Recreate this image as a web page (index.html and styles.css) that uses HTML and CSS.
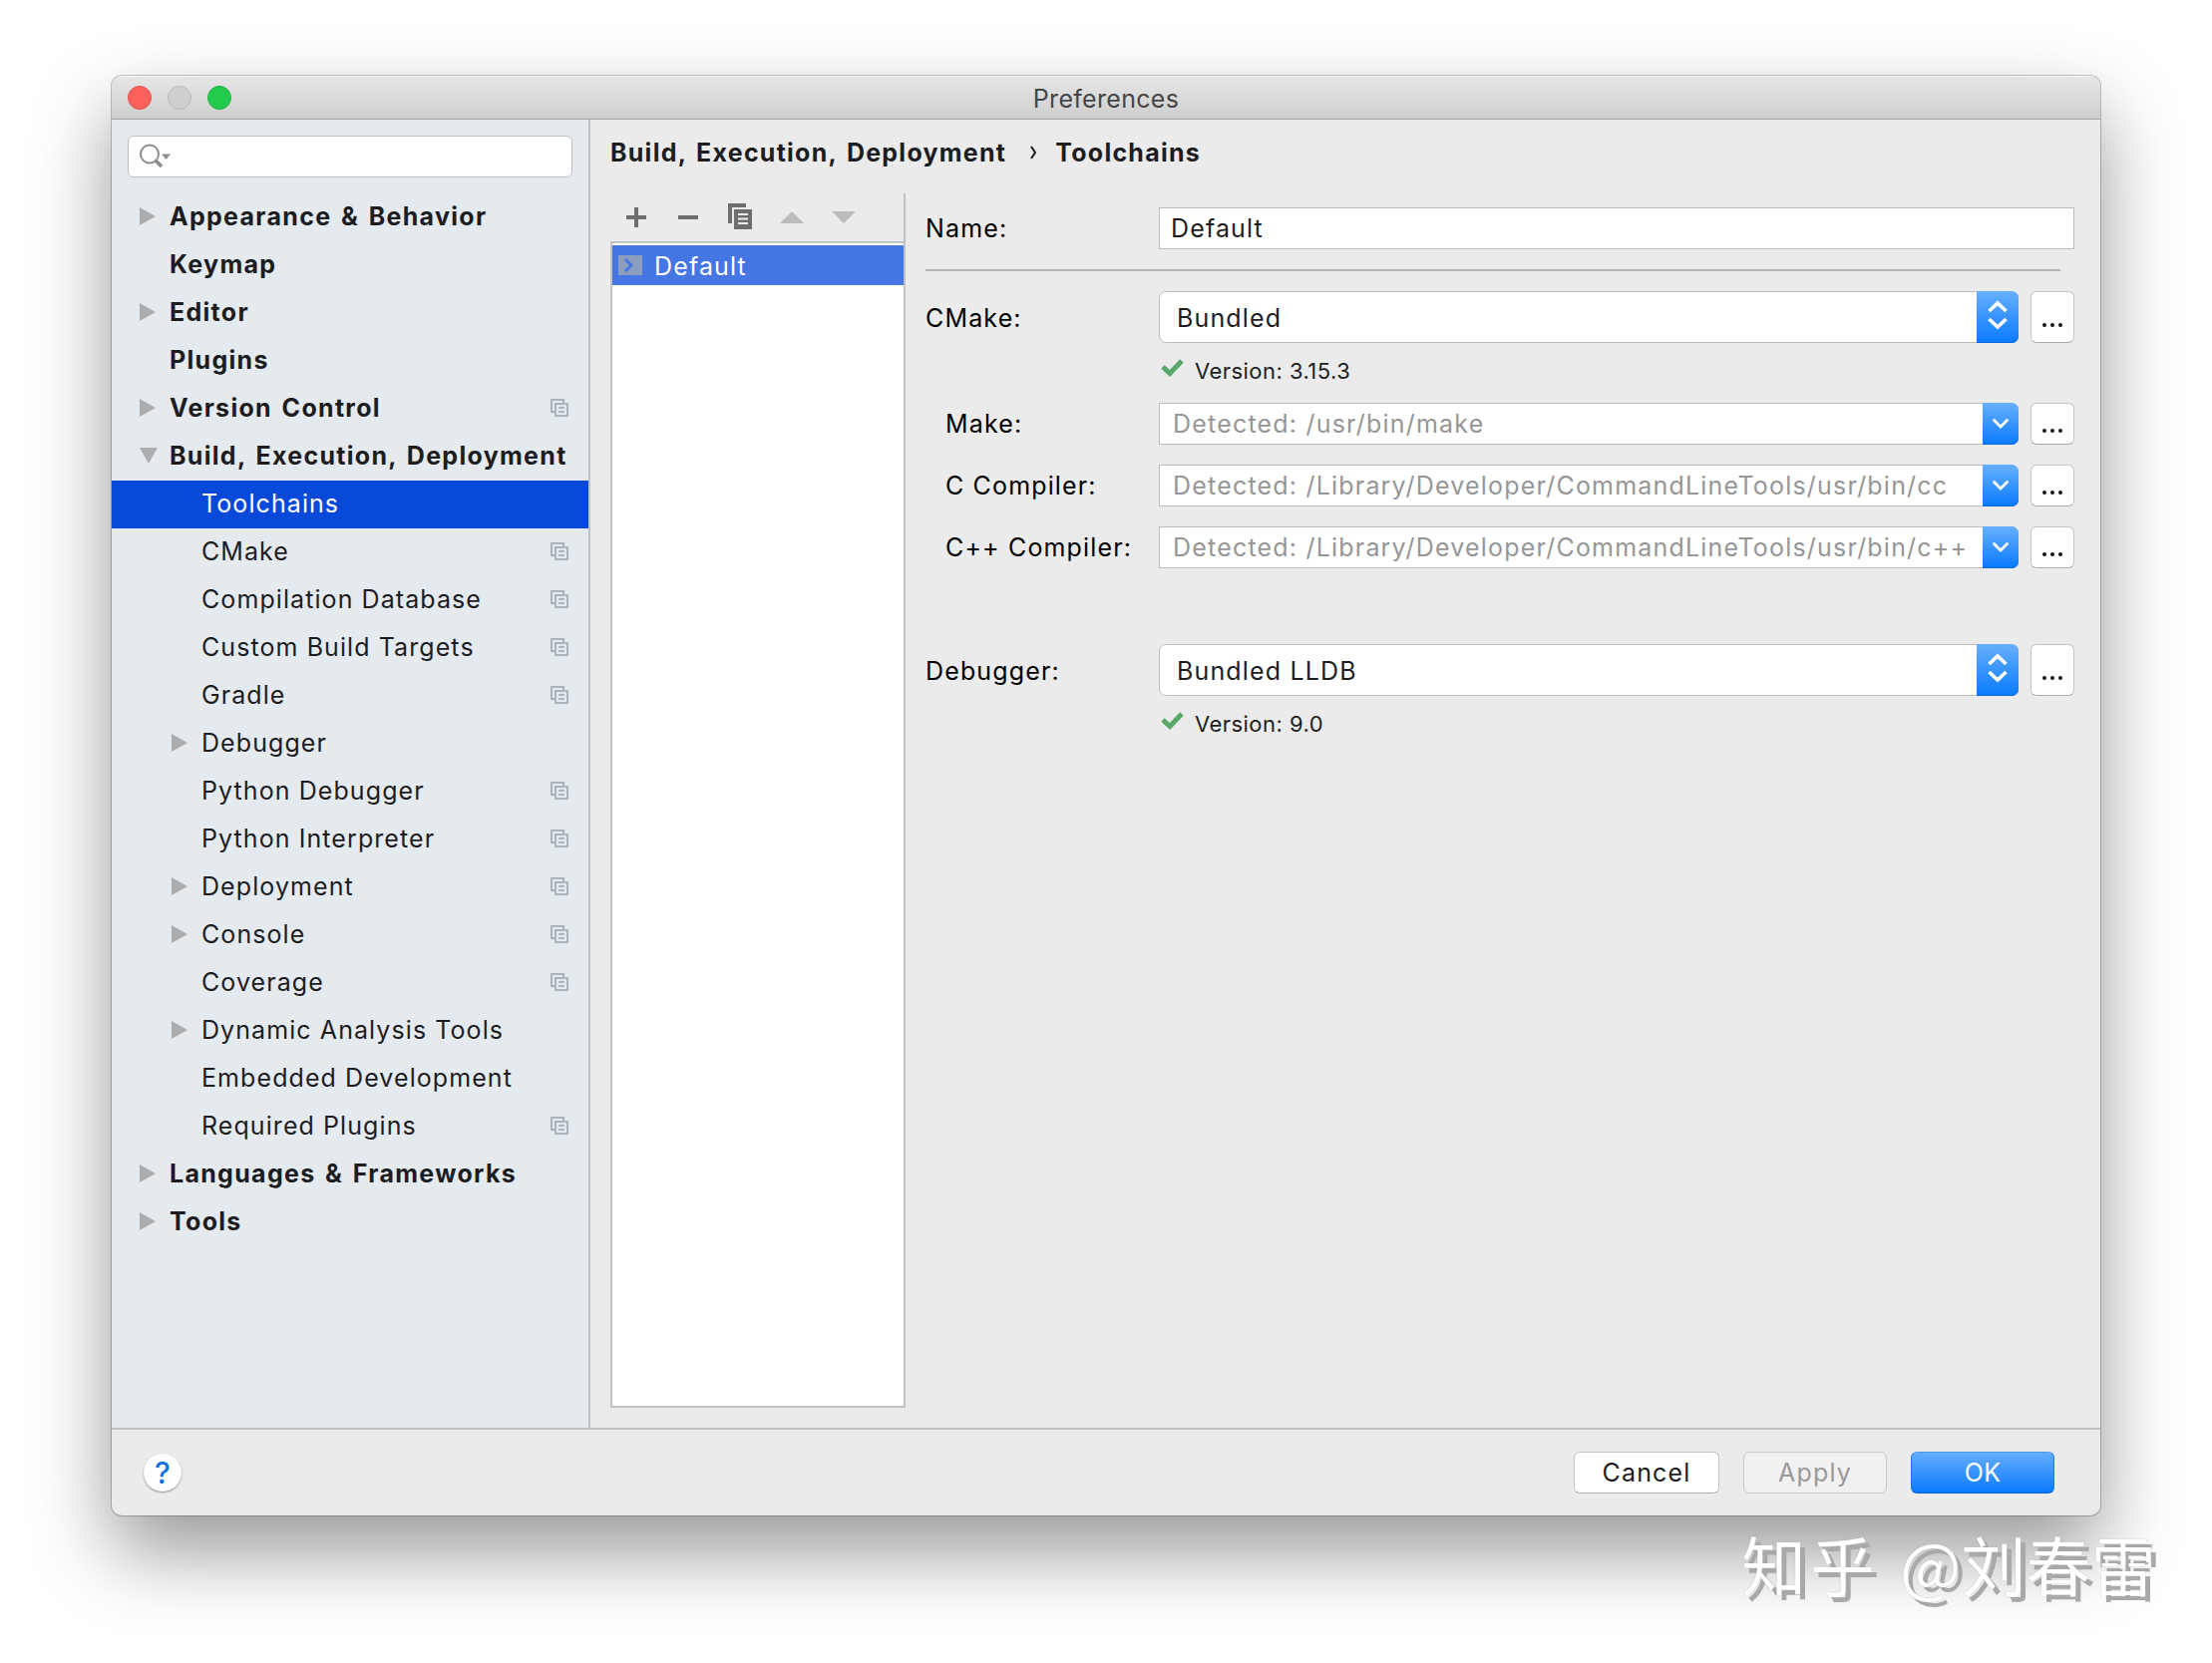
FILE: index.html
```html
<!DOCTYPE html>
<html>
<head>
	<meta charset="utf-8">
	<title>Preferences</title>
	<link rel="stylesheet" href="styles.css">
</head>
<body>
	<!-- shared icons -->
	<svg class="defs">
		<symbol id="right" viewBox="0 0 16 18"><path d="M0 0L16 9L0 18z" fill="#adadad"/></symbol>
		<symbol id="down" viewBox="0 0 18 16"><path d="M0 0H18L9 16z" fill="#adadad"/></symbol>
		<symbol id="proj" viewBox="0 0 18 18"><path d="M4 13H1V1H13V4M5 5H17V17H5zM8 9H14M8 13H14" fill="none" stroke="#a9b4bb" stroke-width="2"/></symbol>
		<symbol id="check" viewBox="0 0 23 18"><path d="M2 8L9 14.500L21 2" fill="none" stroke="#59a869" stroke-width="5"/></symbol>
		<symbol id="updown" viewBox="0 0 20 30"><path d="M1.500 11L10 3L18.500 11M1.500 19L10 27L18.500 19" fill="none" stroke="#fff" stroke-width="3.600"/></symbol>
		<symbol id="chev" viewBox="0 0 16 10"><path d="M1.500 1.500L8 8L14.500 1.500" fill="none" stroke="#fff" stroke-width="2.800" stroke-linecap="round"/></symbol>
	</svg>

	<div class="window">
		<div class="titlebar">
			<div class="lights"><i class="red"></i><i class="gray"></i><i class="green"></i></div>
			<span class="title">Preferences</span>
		</div>

		<div class="content">
			<div class="sidebar">
				<div class="search">
					<svg width="34" height="26" viewBox="0 0 34 26"><circle cx="11" cy="10.500" r="9" fill="none" stroke="#8c8c8c" stroke-width="2"/><path d="M17 17L23 23" stroke="#8c8c8c" stroke-width="3.500"/><path d="M23 10.500H32L27.500 16z" fill="#8c8c8c"/></svg>
				</div>
				<ul class="tree">
					<li class="top"><svg class="arrow"><use href="#right"/></svg>Appearance &amp; Behavior</li>
					<li class="top">Keymap</li>
					<li class="top"><svg class="arrow"><use href="#right"/></svg>Editor</li>
					<li class="top">Plugins</li>
					<li class="top"><svg class="arrow"><use href="#right"/></svg>Version Control<svg class="proj"><use href="#proj"/></svg></li>
					<li class="top"><svg class="arrow open"><use href="#down"/></svg>Build, Execution, Deployment</li>
					<li class="active">Toolchains</li>
					<li>CMake<svg class="proj"><use href="#proj"/></svg></li>
					<li>Compilation Database<svg class="proj"><use href="#proj"/></svg></li>
					<li>Custom Build Targets<svg class="proj"><use href="#proj"/></svg></li>
					<li>Gradle<svg class="proj"><use href="#proj"/></svg></li>
					<li><svg class="arrow"><use href="#right"/></svg>Debugger</li>
					<li>Python Debugger<svg class="proj"><use href="#proj"/></svg></li>
					<li>Python Interpreter<svg class="proj"><use href="#proj"/></svg></li>
					<li><svg class="arrow"><use href="#right"/></svg>Deployment<svg class="proj"><use href="#proj"/></svg></li>
					<li><svg class="arrow"><use href="#right"/></svg>Console<svg class="proj"><use href="#proj"/></svg></li>
					<li>Coverage<svg class="proj"><use href="#proj"/></svg></li>
					<li><svg class="arrow"><use href="#right"/></svg>Dynamic Analysis Tools</li>
					<li>Embedded Development</li>
					<li>Required Plugins<svg class="proj"><use href="#proj"/></svg></li>
					<li class="top"><svg class="arrow"><use href="#right"/></svg>Languages &amp; Frameworks</li>
					<li class="top"><svg class="arrow"><use href="#right"/></svg>Tools</li>
				</ul>
			</div>

			<div class="main">
				<div class="crumbs">
					<span>Build, Execution, Deployment</span>
					<svg width="7" height="14" viewBox="0 0 7 14"><path d="M1 1L5 7L1 13" fill="none" stroke="#1d1d1d" stroke-width="2"/></svg>
					<span>Toolchains</span>
				</div>
				<div class="panes">
					<div class="list-pane">
						<div class="toolbar">
							<svg viewBox="0 0 24 26"><path d="M2 14H22M12 4V24" stroke="#6e6e6e" stroke-width="4"/></svg>
							<svg viewBox="0 0 24 26"><path d="M2 14H22" stroke="#6e6e6e" stroke-width="4"/></svg>
							<svg viewBox="0 0 24 26"><path d="M0 0H18V4H4V20H0z" fill="#6e6e6e"/><path d="M6 6H24V26H6z" fill="#6e6e6e"/><path d="M10 11H20M10 15.500H20M10 20H20" stroke="#ebebeb" stroke-width="2"/></svg>
							<svg viewBox="0 0 24 26"><path d="M0 20L12 8L24 20z" fill="#bcbcbc"/></svg>
							<svg viewBox="0 0 24 26"><path d="M0 8H24L12 20z" fill="#bcbcbc"/></svg>
						</div>
						<div class="list">
							<div class="list-item">
								<svg width="24" height="20" viewBox="0 0 24 20"><path d="M0 0H24V20H0z" fill="#8a9fc0"/><path d="M7 4L13 10L7 16" fill="none" stroke="#4676e3" stroke-width="3"/></svg>
								<span>Default</span>
							</div>
						</div>
					</div>

					<div class="form">
						<div class="row name">
							<label>Name:</label>
							<div class="field">Default</div>
						</div>
						<div class="line"></div>
						<div class="row big">
							<label>CMake:</label>
							<div class="select"><span>Bundled</span><b><svg width="20" height="30"><use href="#updown"/></svg></b></div>
							<div class="more"><i></i><i></i><i></i></div>
						</div>
						<div class="version"><svg width="23" height="18"><use href="#check"/></svg>Version: 3.15.3</div>
						<div class="row sub">
							<label>Make:</label>
							<div class="combo">Detected: /usr/bin/make<b><svg width="16" height="10"><use href="#chev"/></svg></b></div>
							<div class="more"><i></i><i></i><i></i></div>
						</div>
						<div class="row sub">
							<label>C Compiler:</label>
							<div class="combo">Detected: /Library/Developer/CommandLineTools/usr/bin/cc<b><svg width="16" height="10"><use href="#chev"/></svg></b></div>
							<div class="more"><i></i><i></i><i></i></div>
						</div>
						<div class="row sub">
							<label>C++ Compiler:</label>
							<div class="combo">Detected: /Library/Developer/CommandLineTools/usr/bin/c++<b><svg width="16" height="10"><use href="#chev"/></svg></b></div>
							<div class="more"><i></i><i></i><i></i></div>
						</div>
						<div class="row big debugger">
							<label>Debugger:</label>
							<div class="select"><span>Bundled LLDB</span><b><svg width="20" height="30"><use href="#updown"/></svg></b></div>
							<div class="more"><i></i><i></i><i></i></div>
						</div>
						<div class="version"><svg width="23" height="18"><use href="#check"/></svg>Version: 9.0</div>
					</div>
				</div>
			</div>
		</div>

		<div class="footer">
			<div class="help">?</div>
			<div class="btn cancel">Cancel</div>
			<div class="btn apply">Apply</div>
			<div class="btn ok">OK</div>
		</div>
	</div>

	<div class="watermark"><span class="site">知乎</span><span>@刘春雷</span></div>
</body>
</html>
```
FILE: styles.css
```css
*{
	box-sizing: border-box;
}
html,body{
	height: 100%;
}
body{
	margin: 0;
	padding: 76px 112px 0;
	background: #fff;
	overflow: hidden;
	font: 25px/30px Inter, "Noto Sans CJK SC", sans-serif;
	letter-spacing: 1.15px;
	color: #1d1d1f;
}
svg{
	display: block;
	flex: none;
}
.defs{
	display: none;
}
.window{
	display: flex;
	flex-direction: column;
	width: 1994px;
	height: 1444px;
	border-radius: 10px;
	overflow: hidden;
	background: #ebebeb;
	box-shadow: 0 0 0 1px rgba(0,0,0,0.22), 0 36px 80px rgba(0,0,0,0.41);
}

/* title bar */
.titlebar{
	height: 44px;
	flex: none;
	display: grid;
	grid-template-columns: 1fr auto 1fr;
	align-items: center;
	border-bottom: 1px solid #a5a5a5;
	background: linear-gradient(#e6e6e6,#cecece);
	box-shadow: inset 0 1px #f4f4f4;
}
.lights{
	display: flex;
	gap: 16px;
	padding-left: 16px;
}
.lights i{
	width: 24px;
	height: 24px;
	border-radius: 50%;
	border: 1px solid #b9b9b9;
	background: #cfcfcf;
}
.lights .red{
	background: #fc605b;
	border-color: #e0504b;
}
.lights .green{
	background: #22cb4b;
	border-color: #1db140;
}
.title{
	padding-top: 2px;
	letter-spacing: 0.3px;
	color: #464646;
}
.content{
	display: flex;
	flex: 1;
	min-height: 0;
}

/* settings tree */
.sidebar{
	width: 480px;
	padding-top: 16px;
	background: #e5eaef;
	border-right: 2px solid #bfc1c3;
}
.search{
	height: 42px;
	margin: 0 16px;
	padding: 7px 0 0 10px;
	background: #fff;
	border: 1px solid #bcbfc2;
	border-radius: 6px;
}
.tree{
	list-style: none;
	margin: 16px 0 0;
	padding: 0;
}
.tree li{
	display: flex;
	align-items: center;
	height: 48px;
	padding: 0 20px 2px 90px;
	letter-spacing: 1.08px;
	white-space: nowrap;
}
.tree .top{
	padding-left: 58px;
	font-weight: 700;
	letter-spacing: 1.3px;
	word-spacing: 2.4px;
}
.tree .active{
	background: #0849d9;
	color: #fff;
}
.arrow{
	width: 16px;
	height: 18px;
	margin: 0 14px 0 -30px;
}
.arrow.open{
	width: 18px;
	height: 16px;
	margin-right: 12px;
}
.proj{
	width: 18px;
	height: 18px;
	margin-left: auto;
}

/* right side */
.main{
	flex: 1;
	display: flex;
	flex-direction: column;
	padding: 17px 26px 20px 20px;
}
.crumbs{
	display: flex;
	align-items: center;
	height: 32px;
	font-weight: 700;
	letter-spacing: 1.25px;
	word-spacing: 2.4px;
}
.crumbs svg{
	margin: 0 18px 0 24px;
}
.panes{
	display: flex;
	flex: 1;
	margin-top: 25px;
}
.list-pane{
	display: flex;
	flex-direction: column;
	width: 296px;
	border-right: 2px solid #bfc1c3;
}
.toolbar{
	display: flex;
	gap: 28px;
	height: 48px;
	padding: 10px 0 0 14px;
}
.toolbar svg{
	width: 24px;
	height: 26px;
}
.list{
	flex: 1;
	padding-top: 2px;
	background: #fff;
	border: solid #bfc1c3;
	border-width: 2px 0 2px 2px;
}
.list-item{
	display: flex;
	align-items: center;
	gap: 12px;
	height: 40px;
	padding-left: 6px;
	background: #4676e3;
	color: #fff;
}
.list-item span,.select span{
	padding-top: 2px;
}
.form{
	flex: 1;
	padding: 14px 0 0 20px;
	color: #000;
}
.row{
	display: flex;
	height: 42px;
	margin-bottom: 20px;
}
.row label{
	width: 234px;
	line-height: 42px;
	white-space: nowrap;
}
.row.big{
	height: 52px;
	margin-bottom: 0;
}
.row.big label{
	line-height: 54px;
}
.row.sub label{
	padding-left: 20px;
}
.row.debugger{
	margin-top: 76px;
}
.field,.select,.combo{
	display: flex;
	align-items: center;
	flex: 1;
	background: #fff;
	border: 1px solid #bcbcbc;
	padding-left: 11px;
	color: #1d1d1f;
	white-space: nowrap;
}
.select{
	padding-left: 17px;
	border-radius: 7px;
}
.combo{
	padding-left: 13px;
	color: #969696;
	letter-spacing: 1.2px;
	border-radius: 0 7px 7px 0;
}
.select b,.combo b{
	display: flex;
	align-items: center;
	justify-content: center;
	align-self: stretch;
	width: 36px;
	margin: -1px -1px -1px auto;
	background: linear-gradient(#66b0fb,#0a7aff);
	border-radius: 0 7px 7px 0;
	box-shadow: inset 0 -1px #0d66d8;
}
.select b{
	width: 42px;
	padding: 0 1px 5px 0;
}
.line{
	height: 2px;
	margin: 0 14px 20px 0;
	background: #b5b5b5;
}
.more{
	display: flex;
	align-items: flex-end;
	justify-content: center;
	gap: 4px;
	width: 44px;
	margin-left: 12px;
	padding-bottom: 11px;
	background: #fff;
	border: 1px solid #c4c4c4;
	border-bottom-color: #aaa;
	border-radius: 6px;
}
.big .more{
	padding-bottom: 15px;
}
.more i{
	width: 4px;
	height: 4px;
	border-radius: 50%;
	background: #111;
}
.version{
	display: flex;
	align-items: center;
	height: 60px;
	padding: 0 0 5px 236px;
	font-size: 22px;
	letter-spacing: 0.45px;
	color: #1d1d1f;
}
.version svg{
	margin: -5px 11px 0 0;
}

/* bottom buttons */
.footer{
	display: flex;
	align-items: center;
	height: 88px;
	flex: none;
	padding: 0 46px 0 32px;
	border-top: 2px solid #bfbfbf;
}
.help{
	width: 38px;
	height: 38px;
	margin-right: auto;
	border-radius: 50%;
	background: #fff;
	box-shadow: 0 1px 2px rgba(0,0,0,0.4);
	color: #1273e0;
	font-size: 30px;
	font-weight: 500;
	line-height: 39px;
	letter-spacing: 0;
	text-align: center;
}
.btn{
	width: 144px;
	height: 42px;
	margin-left: 24px;
	line-height: 41px;
	text-align: center;
	background: #fff;
	border: 1px solid #c4c4c4;
	border-bottom-color: #aaa;
	border-radius: 6px;
}
.cancel{
	width: 146px;
}
.apply{
	background: #f1f1f1;
	border-color: #c9c9c9;
	color: #999;
}
.ok{
	background: linear-gradient(#62adfb,#0a7aff);
	border-color: #4a97ec #1a78ea #0d62d6;
	color: #fff;
	letter-spacing: 0.3px;
}

.watermark{
	position: absolute;
	left: 1746px;
	top: 1520px;
	display: flex;
	gap: 21px;
	font: 65px/96px "Noto Sans CJK SC", sans-serif;
	letter-spacing: 0;
	color: #fff;
	text-shadow: 0 0 1px #999, 5px 5px 0 #a9a9a9;
}
.watermark .site{
	letter-spacing: 4px;
}
```
